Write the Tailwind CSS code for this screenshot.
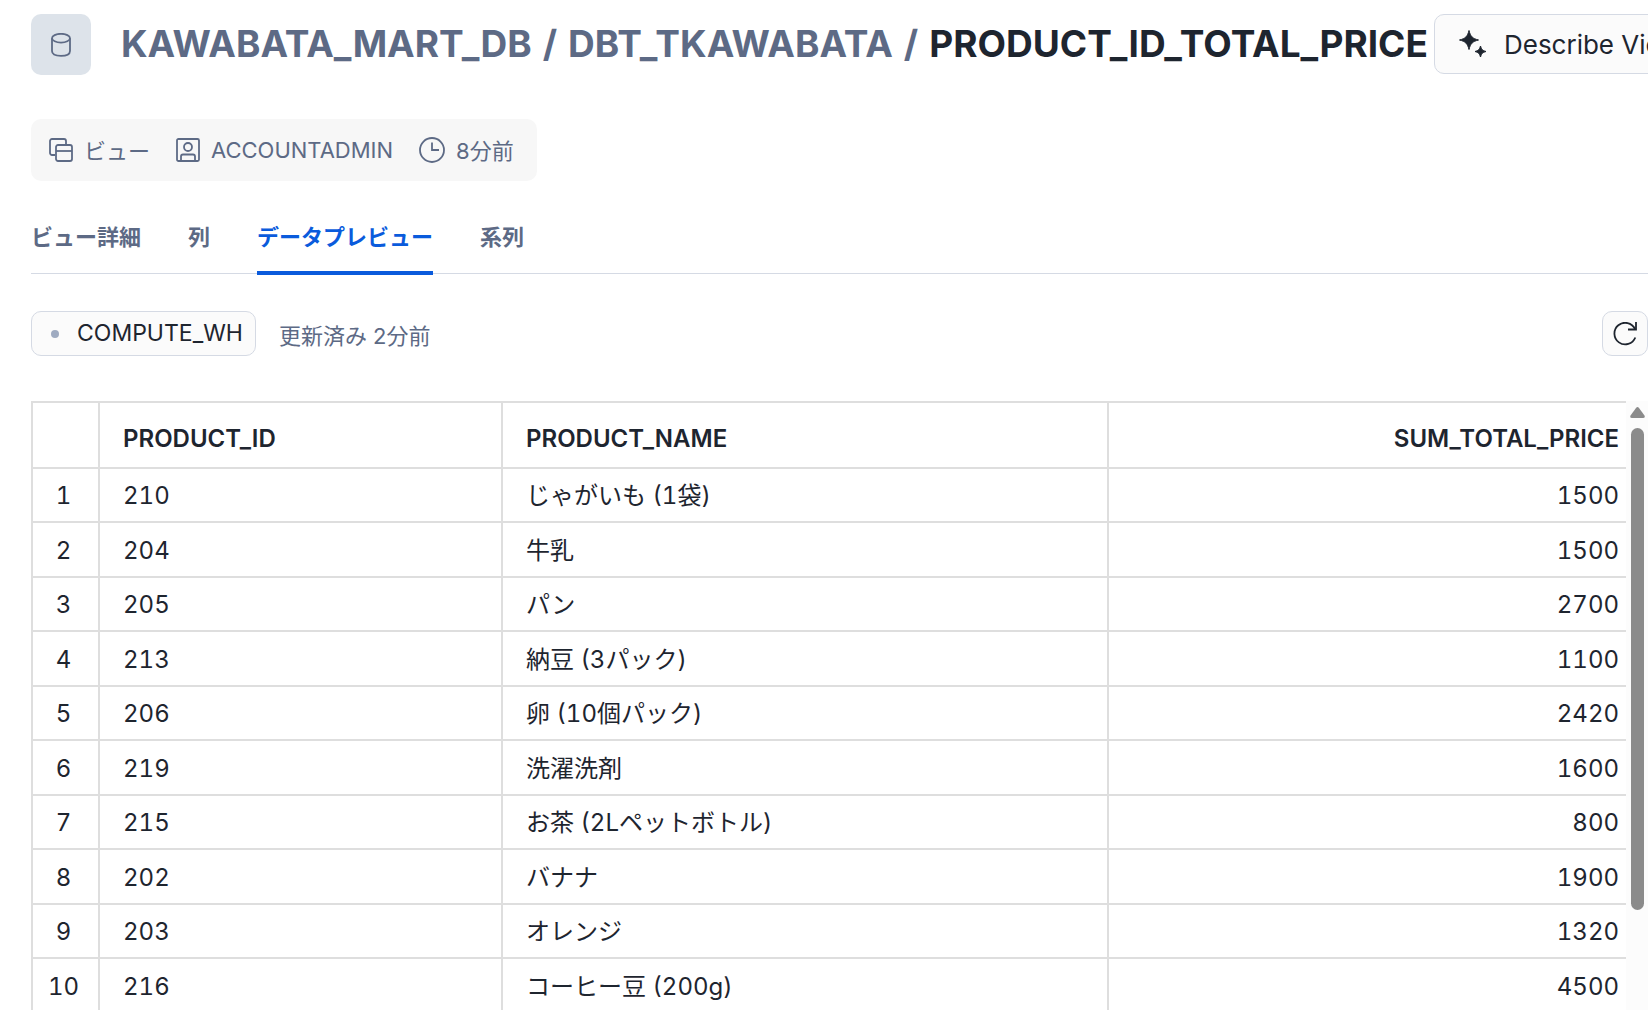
<!DOCTYPE html>
<html lang="ja">
<head>
    <meta charset="UTF-8">
    <meta name="viewport" content="width=device-width, initial-scale=1.0">
    <title>PRODUCT_ID_TOTAL_PRICE</title>
    <script src="https://cdn.jsdelivr.net/npm/@tailwindcss/browser@4"></script>
</head>
<body class="h-screen overflow-hidden flex flex-col bg-white pl-[31px] pt-[14px] font-['Inter','Noto_Sans_CJK_JP',sans-serif] text-[#1e252f]">
    <header class="flex items-start">
        <div class="w-[60px] h-[61px] shrink-0 rounded-[10px] bg-[#dde3ea] flex items-center justify-center">
            <svg class="w-6 h-6" viewBox="0 0 24 24" fill="none" stroke="#5d6a85" stroke-width="1.8">
                <ellipse cx="12" cy="5.2" rx="9" ry="4.4" />
                <path d="M3 5.2v12.800c0 3.200 3 4.800 9 4.800s9-1.600 9-4.800V5.200" />
            </svg>
        </div>
        <h1 class="ml-[30px] mr-[6px] pt-[6px] flex gap-[11px] text-[37px] leading-[48px] font-bold whitespace-nowrap text-[#5d6a85]">
            <a href="#">KAWABATA_MART_DB</a>
            <span>/</span>
            <a href="#">DBT_TKAWABATA</a>
            <span>/</span>
            <span class="text-[#1e252f]">PRODUCT_ID_TOTAL_PRICE</span>
        </h1>
        <button class="h-[60px] shrink-0 flex items-center gap-[17px] pl-6 pr-6 border border-[#d5dae4] rounded-[10px] bg-[#fbfbfb] text-[26px] whitespace-nowrap">
            <svg class="w-7 h-7" viewBox="0 0 28 28" fill="#1e252f">
                <path d="M10 0.500C11.500 6.500 13.500 8.500 19.500 10C13.500 11.500 11.500 13.500 10 19.500C8.500 13.500 6.500 11.500 0.500 10C6.500 8.500 8.500 6.500 10 0.500Z" stroke="#1e252f" />
                <path d="M21.500 16C22.300 19.400 23.600 20.700 27 21.500C23.600 22.300 22.300 23.600 21.500 27C20.700 23.600 19.400 22.300 16 21.500C19.400 20.700 20.700 19.400 21.500 16Z" stroke="#1e252f" />
            </svg>
            Describe View
        </button>
    </header>

    <div class="mt-11 h-[62px] shrink-0 self-start flex items-center gap-[26px] pl-[18px] pr-[23px] rounded-[10px] bg-[#f7f7f7] text-[22px] text-[#5d6a85]">
        <div class="flex items-center gap-[11px]">
            <svg class="w-6 h-6" viewBox="0 0 24 24" fill="none" stroke="#5d6a85" stroke-width="1.8">
                <path d="M6 17H3a2 2 0 0 1-2-2V3a2 2 0 0 1 2-2h12a2 2 0 0 1 2 2v3" />
                <rect x="7" y="7" width="16" height="16" rx="2" />
                <path d="M7 13h16" />
            </svg>
            <span class="pt-[3px]">ビュー</span>
        </div>
        <div class="flex items-center gap-[11px]">
            <svg class="w-6 h-6" viewBox="0 0 24 24" fill="none" stroke="#5d6a85" stroke-width="1.8">
                <rect x="1" y="1" width="22" height="22" rx="1.5" />
                <circle cx="12" cy="9" r="4" />
                <path d="M5 23v-4.500a2 2 0 0 1 2-2h10a2 2 0 0 1 2 2V23" />
            </svg>
            ACCOUNTADMIN
        </div>
        <div class="flex items-center gap-[11px]">
            <svg class="w-[26px] h-[26px]" viewBox="0 0 26 26" fill="none" stroke="#5d6a85" stroke-width="1.8">
                <circle cx="13" cy="13" r="12" />
                <path d="M13 5.500V13h7" />
            </svg>
            <span class="pt-[3px]">8分前</span>
        </div>
    </div>

    <nav class="mt-[33px] h-[60px] shrink-0 flex gap-[47px] border-b border-[#d5dae4] text-[22px] font-bold text-[#5d6a85]">
        <a href="#" class="h-[61px] pt-[7px]">ビュー詳細</a>
        <a href="#" class="h-[61px] pt-[7px]">列</a>
        <a href="#" class="h-[61px] pt-[7px] border-b-4 border-[#0a5bdc] text-[#0a5bdc]">データプレビュー</a>
        <a href="#" class="h-[61px] pt-[7px]">系列</a>
    </nav>

    <div class="mt-[37px] h-[45px] shrink-0 flex items-center">
        <button class="h-[45px] flex items-center gap-[18px] pl-[19px] pr-3 border border-[#d5dae4] rounded-[10px] bg-[#fbfbfb] text-[23px]">
            <span class="size-2 rounded-full bg-[#9fabc1]"></span>
            COMPUTE_WH
        </button>
        <span class="ml-[23px] pt-[6px] text-[22px] text-[#5d6a85]">更新済み 2分前</span>
        <button aria-label="更新" class="ml-auto w-[46px] h-[45px] flex items-center justify-center border border-[#d5dae4] rounded-[10px] bg-[#fbfbfb]">
            <svg class="w-6 h-6" viewBox="0 0 24 24" fill="none" stroke="#1e252f" stroke-width="1.8">
                <path d="M22.300 15.500A10.800 10.800 0 1 1 22 7" />
                <path d="M23 0v7.500h-8" />
            </svg>
        </button>
    </div>

    <div class="mt-[45px] flex-1 min-h-0 flex">
        <div class="flex-1 overflow-hidden">
            <table class="w-full table-fixed border-collapse border-l-2 border-t-2 border-[#dedede] text-[24px] leading-[32px] tabular-nums">
                <thead>
                    <tr class="h-[66px] border-b-2 border-[#dedede] text-left">
                        <th class="w-[67px] border-r-2 border-[#dedede]"></th>
                        <th class="w-[403px] border-r-2 border-[#dedede] pl-[23px] pt-[7px] font-semibold">PRODUCT_ID</th>
                        <th class="w-[606px] border-r-2 border-[#dedede] pl-[23px] pt-[7px] font-semibold">PRODUCT_NAME</th>
                        <th class="pr-[7px] pt-[7px] font-semibold text-right">SUM_TOTAL_PRICE</th>
                    </tr>
                </thead>
                <tbody id="rows"></tbody>
            </table>
        </div>
        <!-- scrollbar -->
        <div class="w-[22px] flex flex-col items-center bg-[#fcfcfc]">
            <svg class="mt-[6px] w-[15px] h-[11px] shrink-0" viewBox="0 0 15 11" fill="#8b8b8b">
                <path d="M6 1Q7.500-0.800 9 1L14.500 8.500Q15.500 11 13 11H2Q-0.500 11 0.500 8.500Z" />
            </svg>
            <div class="mt-[10px] w-[13px] h-[482px] rounded-full bg-[#8b8b8b]"></div>
        </div>
    </div>

    <script>
        const data = [
            [210, 'じゃがいも (1袋)', 1500],
            [204, '牛乳', 1500],
            [205, 'パン', 2700],
            [213, '納豆 (3パック)', 1100],
            [206, '卵 (10個パック)', 2420],
            [219, '洗濯洗剤', 1600],
            [215, 'お茶 (2Lペットボトル)', 800],
            [202, 'バナナ', 1900],
            [203, 'オレンジ', 1320],
            [216, 'コーヒー豆 (200g)', 4500],
        ];

        document.getElementById('rows').innerHTML = data.map(([id, name, total], i) => `
            <tr class="h-[54px] even:h-[55px] border-b-2 border-[#dedede]">
                <td class="border-r-2 border-[#dedede] pr-1 pt-[2px] text-center">${i + 1}</td>
                <td class="border-r-2 border-[#dedede] pl-[23px] pt-[2px]">${id}</td>
                <td class="border-r-2 border-[#dedede] pl-[23px] pt-[2px]">${name}</td>
                <td class="pr-[7px] pt-[2px] text-right">${total}</td>
            </tr>
        `).join('');
    </script>
</body>
</html>
